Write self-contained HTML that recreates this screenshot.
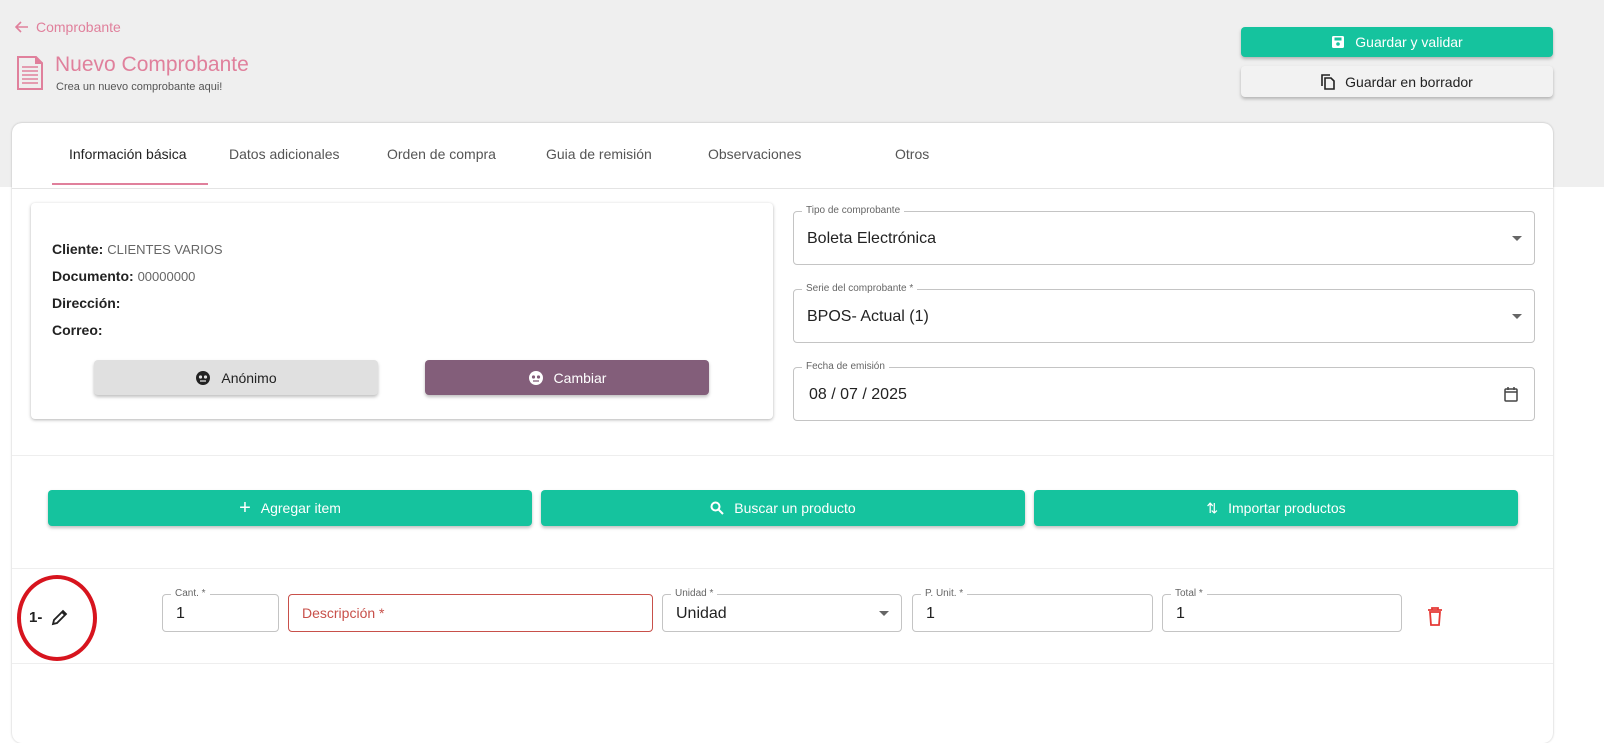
<!DOCTYPE html>
<html><head><meta charset="utf-8"><style>
*{box-sizing:border-box;margin:0;padding:0}
body{width:1604px;height:691px;position:relative;overflow:hidden;background:#fff;font-family:"Liberation Sans",sans-serif;color:#222}
.a{position:absolute}
.gray{left:0;top:0;width:1604px;height:187px;background:#efefef}
.card{left:12px;top:123px;width:1541px;height:620px;background:#fff;border-radius:10px;box-shadow:0 0 2px rgba(0,0,0,.25)}
.btn{display:flex;align-items:center;justify-content:center;gap:10px;font-size:14px;border-radius:4px;box-shadow:0 2px 3px rgba(0,0,0,.25)}
.green{background:#15c39e;color:#fff}
.tab{top:146px;font-size:14px;color:#555}
.fld{border:1px solid #c4c4c4;border-radius:4px;background:#fff}
.lbl{font-size:10px;color:#666;background:#fff;padding:0 4px;top:-7px;left:8px;line-height:12px}
.val{font-size:16px;color:#222}
.ln{height:1px;background:#eee}
</style></head><body>
<div class="a gray"></div>
<svg class="a" style="left:15px;top:21px" width="14" height="12" viewBox="0 0 14 12"><path d="M13 6H2M6 1L1 6l5 5" fill="none" stroke="#e0809c" stroke-width="1.6"/></svg>
<div class="a" style="left:36px;top:19px;font-size:14px;color:#e0809c">Comprobante</div>
<svg class="a" style="left:16px;top:55px" width="28" height="36" viewBox="0 0 28 36"><path d="M2 2h18l6 6v26H2z" fill="none" stroke="#e0809c" stroke-width="2"/><path d="M19 2v7h7z" fill="#e0809c"/><path d="M6 12h16M6 16h16M6 20h16M6 24h16M6 28h16" stroke="#e0809c" stroke-width="1.5"/></svg>
<div class="a" style="left:55px;top:53px;font-size:21px;color:#e0809c">Nuevo Comprobante</div>
<div class="a" style="left:56px;top:81px;font-size:11px;color:#555">Crea un nuevo comprobante aqui!</div>
<div class="a btn green" style="left:1241px;top:27px;width:312px;height:30px">
<svg width="14" height="14" viewBox="0 0 14 14"><rect x="1" y="1" width="12" height="12" rx="1.5" fill="#fff"/><rect x="3.5" y="2.5" width="7" height="3" fill="#15c39e"/><circle cx="7" cy="9" r="1.8" fill="#15c39e"/></svg>Guardar y validar</div>
<div class="a btn" style="left:1241px;top:66px;width:312px;height:31px;background:#f2f2f2;color:#222">
<svg width="14" height="16" viewBox="0 0 14 16"><path d="M1 12V1h8" fill="none" stroke="#222" stroke-width="1.6"/><path d="M4 4h6l3 3v8H4z" fill="none" stroke="#222" stroke-width="1.6"/></svg>Guardar en borrador</div>
<div class="a card"></div>
<div class="a tab" style="left:69px;color:#222">Información básica</div>
<div class="a tab" style="left:229px">Datos adicionales</div>
<div class="a tab" style="left:387px">Orden de compra</div>
<div class="a tab" style="left:546px">Guia de remisión</div>
<div class="a tab" style="left:708px">Observaciones</div>
<div class="a tab" style="left:895px">Otros</div>
<div class="a" style="left:52px;top:183px;width:156px;height:2px;background:#e0809c"></div>
<div class="a ln" style="left:12px;top:188px;width:1541px;background:#e4e4e4"></div>
<div class="a" style="left:31px;top:203px;width:742px;height:216px;border-radius:4px;box-shadow:0 1px 3px rgba(0,0,0,.3)"></div>
<div class="a" style="left:52px;top:236px;font-size:14px;line-height:27px;color:#222;font-weight:bold">
<div>Cliente: <span style="font-weight:normal;color:#666;font-size:13px">CLIENTES VARIOS</span></div>
<div>Documento: <span style="font-weight:normal;color:#666;font-size:13px">00000000</span></div>
<div>Dirección:</div><div>Correo:</div></div>
<div class="a btn" style="left:94px;top:360px;width:284px;height:35px;background:#e0e0e0;color:#222"><svg width="16" height="16" viewBox="0 0 16 16"><circle cx="8" cy="8" r="7" fill="#222"/><circle cx="5.5" cy="7" r="1.6" fill="#e0e0e0"/><circle cx="10.5" cy="7" r="1.6" fill="#e0e0e0"/><path d="M5 11h6" stroke="#e0e0e0" stroke-width="1.3"/></svg>Anónimo</div>
<div class="a btn" style="left:425px;top:360px;width:284px;height:35px;background:#835e7a;color:#fff"><svg width="16" height="16" viewBox="0 0 16 16"><circle cx="8" cy="8" r="7" fill="#fff"/><circle cx="5.5" cy="7" r="1.6" fill="#835e7a"/><circle cx="10.5" cy="7" r="1.6" fill="#835e7a"/><path d="M5 11h6" stroke="#835e7a" stroke-width="1.3"/></svg>Cambiar</div>
<div class="a fld" style="left:793px;top:211px;width:742px;height:54px"><div class="a lbl">Tipo de comprobante</div><div class="a val" style="left:13px;top:18px">Boleta Electrónica</div><div class="a" style="right:12px;top:24px;border:5px solid transparent;border-top-color:#666"></div></div>
<div class="a fld" style="left:793px;top:289px;width:742px;height:54px"><div class="a lbl">Serie del comprobante *</div><div class="a val" style="left:13px;top:18px">BPOS- Actual (1)</div><div class="a" style="right:12px;top:24px;border:5px solid transparent;border-top-color:#666"></div></div>
<div class="a fld" style="left:793px;top:367px;width:742px;height:54px"><div class="a lbl">Fecha de emisión</div><div class="a val" style="left:15px;top:18px">08 / 07 / 2025</div>
<svg class="a" style="right:16px;top:18px" width="14" height="16" viewBox="0 0 14 16"><rect x="1" y="3" width="12" height="12" rx="1" fill="none" stroke="#444" stroke-width="1.5"/><path d="M1 6h12M4 1v3M10 1v3" stroke="#444" stroke-width="1.5"/></svg></div>
<div class="a ln" style="left:12px;top:455px;width:1541px"></div>
<div class="a btn green" style="left:48px;top:490px;width:484px;height:36px"><span style="font-size:20px;line-height:1">+</span>Agregar item</div>
<div class="a btn green" style="left:541px;top:490px;width:484px;height:36px"><svg width="14" height="14" viewBox="0 0 14 14"><circle cx="5.5" cy="5.5" r="4" fill="none" stroke="#fff" stroke-width="2"/><path d="M8.5 8.5l4.5 4.5" stroke="#fff" stroke-width="2"/></svg>Buscar un producto</div>
<div class="a btn green" style="left:1034px;top:490px;width:484px;height:36px"><span>⇅</span>Importar productos</div>
<div class="a ln" style="left:12px;top:568px;width:1541px"></div>
<div class="a ln" style="left:12px;top:663px;width:1541px"></div>
<div class="a" style="left:17px;top:575px;width:80px;height:86px;border:4px solid #d7141e;border-radius:50%"></div>
<div class="a" style="left:29px;top:609px;font-size:15px;font-weight:bold">1-</div>
<svg class="a" style="left:51px;top:608px" width="18" height="18" viewBox="0 0 18 18"><path d="M2 16l1-4 9-9 3 3-9 9z" fill="none" stroke="#222" stroke-width="1.8"/><path d="M11 4l3 3" stroke="#222" stroke-width="1.8"/></svg>
<div class="a fld" style="left:162px;top:594px;width:117px;height:38px"><div class="a lbl">Cant. *</div><div class="a val" style="left:13px;top:10px">1</div></div>
<div class="a fld" style="left:288px;top:594px;width:365px;height:38px;border-color:#c8504a"><div class="a" style="left:13px;top:10px;font-size:14px;color:#c8504a">Descripción *</div></div>
<div class="a fld" style="left:662px;top:594px;width:240px;height:38px"><div class="a lbl">Unidad *</div><div class="a val" style="left:13px;top:10px">Unidad</div><div class="a" style="right:12px;top:16px;border:5px solid transparent;border-top-color:#666"></div></div>
<div class="a fld" style="left:912px;top:594px;width:241px;height:38px"><div class="a lbl">P. Unit. *</div><div class="a val" style="left:13px;top:10px">1</div></div>
<div class="a fld" style="left:1162px;top:594px;width:240px;height:38px"><div class="a lbl">Total *</div><div class="a val" style="left:13px;top:10px">1</div></div>
<svg class="a" style="left:1427px;top:607px" width="16" height="19" viewBox="0 0 16 19"><path d="M1 3h14M5 3V1h6v2" stroke="#e53935" stroke-width="1.8" fill="none"/><path d="M3 5h10l-1 13H4z" fill="none" stroke="#e53935" stroke-width="1.8"/></svg>
</body></html>
